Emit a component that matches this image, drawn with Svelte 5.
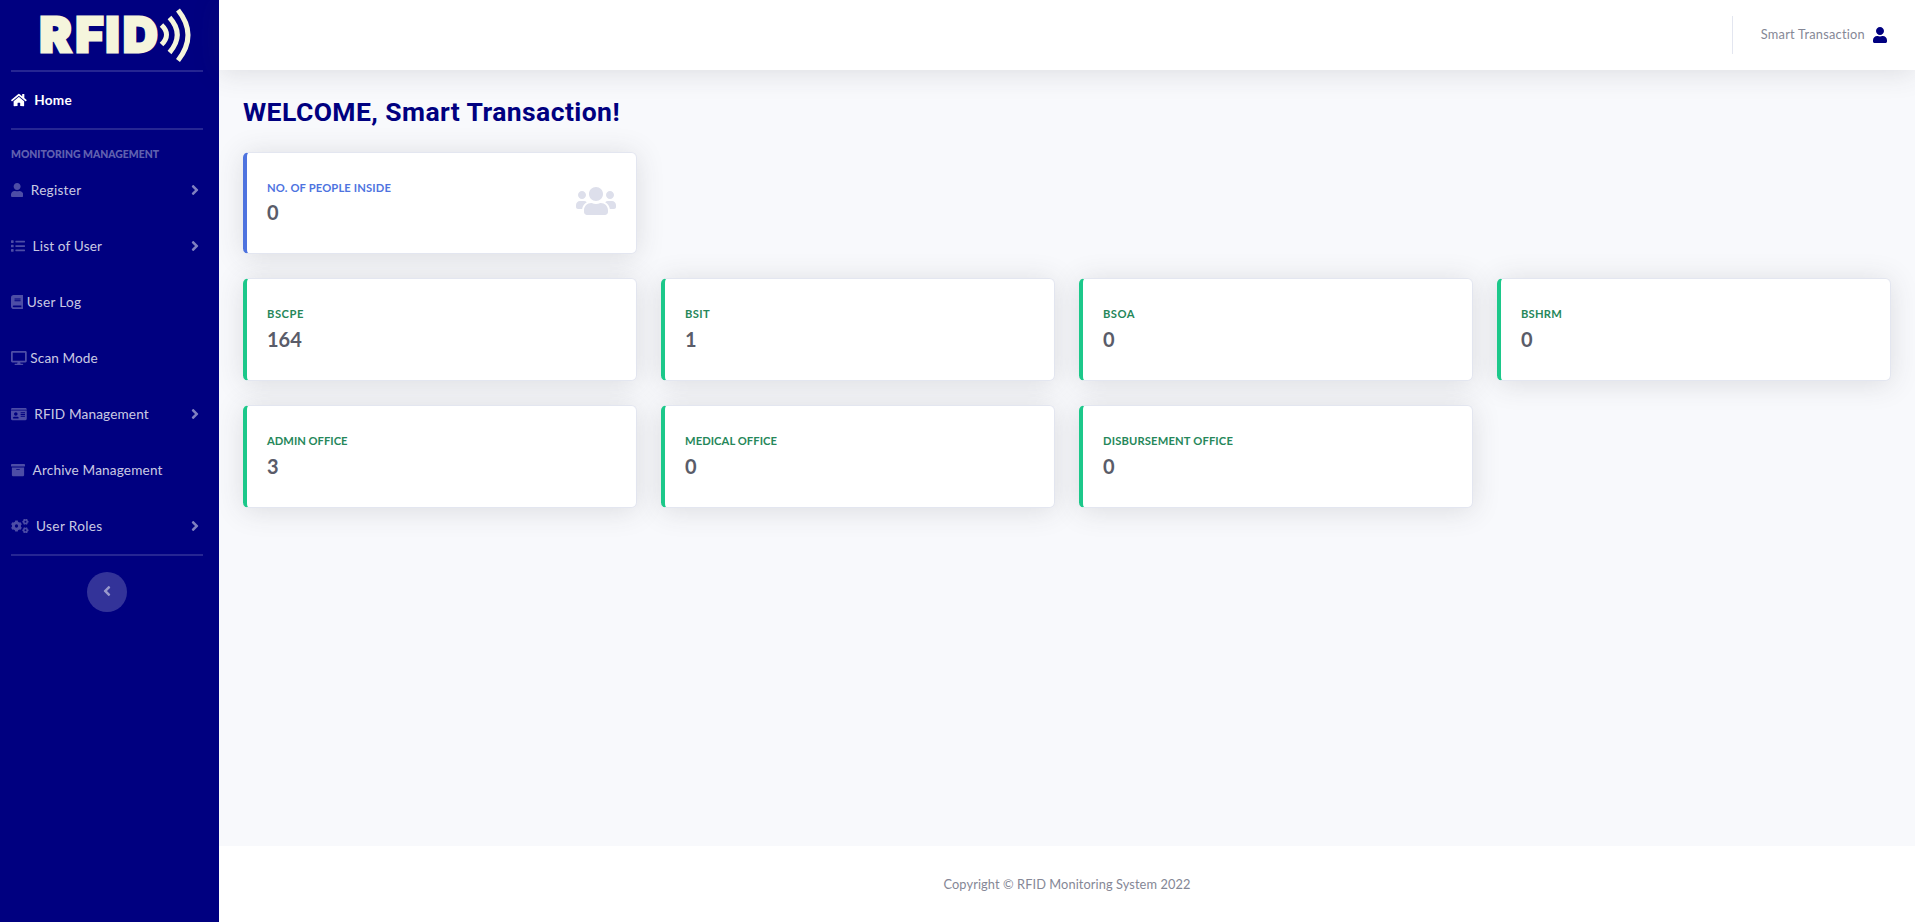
<script>
  const icons = {
    home: [576, 'M280.37 148.26L96 300.11V464a16 16 0 0 0 16 16l112.06-.29a16 16 0 0 0 15.92-16V368a16 16 0 0 1 16-16h64a16 16 0 0 1 16 16v95.64a16 16 0 0 0 16 16.05L464 480a16 16 0 0 0 16-16V300L295.67 148.26a12.19 12.19 0 0 0-15.3 0zM571.6 251.47L488 182.56V44.05a12 12 0 0 0-12-12h-56a12 12 0 0 0-12 12v72.61L318.47 43a48 48 0 0 0-61 0L4.34 251.47a12 12 0 0 0-1.6 16.9l25.5 31A12 12 0 0 0 45.15 301l235.22-193.74a12.19 12.19 0 0 1 15.3 0L530.9 301a12 12 0 0 0 16.9-1.6l25.5-31a12 12 0 0 0-1.7-16.93z'],
    user: [448, 'M224 256c70.7 0 128-57.3 128-128S294.7 0 224 0 96 57.3 96 128s57.3 128 128 128zm89.6 32h-16.7c-22.2 10.2-46.9 16-72.9 16s-50.6-5.8-72.9-16h-16.7C60.2 288 0 348.2 0 422.4V464c0 26.5 21.5 48 48 48h352c26.5 0 48-21.5 48-48v-41.6c0-74.2-60.2-134.4-134.4-134.4z'],
    list: [512, 'M80 368H16a16 16 0 0 0-16 16v64a16 16 0 0 0 16 16h64a16 16 0 0 0 16-16v-64a16 16 0 0 0-16-16zm0-320H16A16 16 0 0 0 0 64v64a16 16 0 0 0 16 16h64a16 16 0 0 0 16-16V64a16 16 0 0 0-16-16zm0 160H16a16 16 0 0 0-16 16v64a16 16 0 0 0 16 16h64a16 16 0 0 0 16-16v-64a16 16 0 0 0-16-16zm416 176H176a16 16 0 0 0-16 16v32a16 16 0 0 0 16 16h320a16 16 0 0 0 16-16v-32a16 16 0 0 0-16-16zm0-320H176a16 16 0 0 0-16 16v32a16 16 0 0 0 16 16h320a16 16 0 0 0 16-16V80a16 16 0 0 0-16-16zm0 160H176a16 16 0 0 0-16 16v32a16 16 0 0 0 16 16h320a16 16 0 0 0 16-16v-32a16 16 0 0 0-16-16z'],
    book: [448, 'M448 360V24c0-13.3-10.7-24-24-24H96C43 0 0 43 0 96v320c0 53 43 96 96 96h328c13.3 0 24-10.7 24-24v-16c0-7.5-3.5-14.3-8.9-18.7-4.2-15.4-4.2-59.3 0-74.7 5.4-4.3 8.9-11.1 8.9-18.6zM128 134c0-3.3 2.7-6 6-6h212c3.3 0 6 2.7 6 6v20c0 3.3-2.7 6-6 6H134c-3.3 0-6-2.7-6-6v-20zm0 64c0-3.3 2.7-6 6-6h212c3.3 0 6 2.7 6 6v20c0 3.3-2.7 6-6 6H134c-3.3 0-6-2.7-6-6v-20zm253.4 250H96c-17.7 0-32-14.3-32-32 0-17.6 14.4-32 32-32h285.4c-1.9 17.1-1.9 46.9 0 64z'],
    desktop: [576, 'M528 0H48C21.5 0 0 21.5 0 48v320c0 26.5 21.5 48 48 48h192l-16 48h-72c-13.3 0-24 10.7-24 24s10.7 24 24 24h272c13.3 0 24-10.7 24-24s-10.7-24-24-24h-72l-16-48h192c26.5 0 48-21.5 48-48V48c0-26.5-21.5-48-48-48zm-16 352H64V64h448v288z'],
    card: [576, 'M528 32H48C21.5 32 0 53.5 0 80v16h576V80c0-26.5-21.5-48-48-48zM0 432c0 26.5 21.5 48 48 48h480c26.5 0 48-21.5 48-48V128H0v304zm352-232c0-4.4 3.6-8 8-8h144c4.4 0 8 3.6 8 8v16c0 4.4-3.6 8-8 8H360c-4.4 0-8-3.6-8-8v-16zm0 64c0-4.4 3.6-8 8-8h144c4.4 0 8 3.6 8 8v16c0 4.4-3.6 8-8 8H360c-4.4 0-8-3.6-8-8v-16zm0 64c0-4.4 3.6-8 8-8h144c4.4 0 8 3.6 8 8v16c0 4.4-3.6 8-8 8H360c-4.4 0-8-3.6-8-8v-16zM176 192c35.3 0 64 28.7 64 64s-28.7 64-64 64-64-28.7-64-64 28.7-64 64-64zM67.1 396.2C75.5 370.5 99.6 352 128 352h8.2c12.3 5.1 25.7 8 39.8 8s27.6-2.9 39.8-8h8.2c28.4 0 52.5 18.5 60.9 44.2 3.2 9.9-5.2 19.8-15.6 19.8H82.7c-10.4 0-18.8-10-15.6-19.8z'],
    archive: [512, 'M32 448c0 17.7 14.3 32 32 32h384c17.7 0 32-14.3 32-32V160H32v288zm160-212c0-6.6 5.4-12 12-12h104c6.6 0 12 5.4 12 12v8c0 6.6-5.4 12-12 12H204c-6.6 0-12-5.4-12-12v-8zM480 32H32C14.3 32 0 46.3 0 64v48c0 8.8 7.2 16 16 16h480c8.8 0 16-7.2 16-16V64c0-17.7-14.3-32-32-32z'],
    cogs: [640, gear(200, 256, 204, 166, 60, 30) + gear(528, 100, 116, 94, 36, 0) + gear(528, 412, 116, 94, 36, 0)],
    users: [640, 'M96 224c35.3 0 64-28.7 64-64s-28.7-64-64-64-64 28.7-64 64 28.7 64 64 64zm448 0c35.3 0 64-28.7 64-64s-28.7-64-64-64-64 28.7-64 64 28.7 64 64 64zm32 32h-64c-17.6 0-33.5 7.1-45.1 18.6 40.3 22.1 68.9 62 75.1 109.4h66c17.7 0 32-14.3 32-32v-32c0-35.3-28.7-64-64-64zm-256 0c61.9 0 112-50.1 112-112S381.9 32 320 32 208 82.1 208 144s50.1 112 112 112zm76.8 32h-8.3c-20.8 10-43.9 16-68.5 16s-47.6-6-68.5-16h-8.3C179.6 288 128 339.6 128 403.2V432c0 26.5 21.5 48 48 48h288c26.5 0 48-21.5 48-48v-28.8c0-63.6-51.6-115.2-115.2-115.2zm-223.7-13.4C161.5 263.1 145.6 256 128 256H64c-35.3 0-64 28.7-64 64v32c0 17.7 14.3 32 32 32h65.9c6.3-47.4 34.9-87.3 75.2-109.4z'],
    right: [256, 'M224.3 273l-136 136c-9.4 9.4-24.6 9.4-33.9 0l-22.6-22.6c-9.4-9.4-9.4-24.6 0-33.9l96.4-96.4-96.4-96.4c-9.4-9.4-9.4-24.6 0-33.9L54.3 103c9.4-9.4 24.6-9.4 33.9 0l136 136c9.5 9.4 9.5 24.6.1 34z'],
    left: [256, 'M31.7 239l136-136c9.4-9.4 24.6-9.4 33.9 0l22.6 22.6c9.4 9.4 9.4 24.6 0 33.9L127.9 256l96.4 96.4c9.4 9.4 9.4 24.6 0 33.9L201.7 409c-9.4 9.4-24.6 9.4-33.9 0l-136-136c-9.5-9.4-9.5-24.6-.1-34z']
  };

  // Six-toothed gear outline with a round hole.
  function gear(cx, cy, outer, inner, hole, turn) {
    const pts = [];
    for (let i = 0; i < 6; i++) {
      for (const [off, r] of [[-20, inner], [-13, outer], [13, outer], [20, inner]]) {
        const a = ((i * 60 + off + turn) * Math.PI) / 180;
        pts.push(`${(cx + r * Math.cos(a)).toFixed(1)} ${(cy + r * Math.sin(a)).toFixed(1)}`);
      }
    }
    return `M${pts.join('L')}zM${cx - hole} ${cy}a${hole} ${hole} 0 1 0 ${2 * hole} 0a${hole} ${hole} 0 1 0 ${-2 * hole} 0z`;
  }

  const menu = [
    { label: 'Register', icon: 'user', more: true, width: 50.5 },
    { label: 'List of User', icon: 'list', more: true, width: 69.5 },
    { label: 'User Log', icon: 'book', tight: true, width: 54.5 },
    { label: 'Scan Mode', icon: 'desktop', tight: true, width: 67.5 },
    { label: 'RFID Management', icon: 'card', more: true, width: 114.5 },
    { label: 'Archive Management', icon: 'archive', width: 130 },
    { label: 'User Roles', icon: 'cogs', more: true, width: 66.5 }
  ];

  const rows = [
    [{ label: 'No. of people inside', value: 0, people: true, width: 124 }],
    [
      { label: 'BSCPE', value: 164, width: 37 },
      { label: 'BSIT', value: 1, width: 25 },
      { label: 'BSOA', value: 0, width: 32 },
      { label: 'BSHRM', value: 0, width: 41 }
    ],
    [
      { label: 'Admin Office', value: 3, width: 80.5 },
      { label: 'Medical Office', value: 0, width: 92 },
      { label: 'Disbursement Office', value: 0, width: 130 }
    ]
  ];

  // Tracks the text so that it takes the given width.
  function fit(node, width) {
    const natural = node.getBoundingClientRect().width;
    node.style.letterSpacing = `${(width - natural) / node.textContent.length}px`;
  }
</script>

{#snippet glyph(name)}
  <svg class="icon" viewBox="0 0 {icons[name][0]} 512" style:width="{icons[name][0] / 512}em" aria-hidden="true">
    <path fill="currentColor" fill-rule="evenodd" d={icons[name][1]} />
  </svg>
{/snippet}

<div class="page">
  <nav class="sidebar">
    <svg class="logo" viewBox="0 0 219 70" role="img">
      <text x="39.5 75.5 105.5 123" y="51.800" font-size="48">RFID</text>
      <g fill="none" stroke-width="5">
        <path d="M161.500 25Q171.500 34.500 161.500 44.500" />
        <path d="M169.500 17.500Q185 34.500 169.500 52.500" />
        <path d="M178 10Q198 35 178 60.500" />
      </g>
    </svg>
    <hr />
    <a class="item home" href="#home">
      {@render glyph('home')}<span use:fit={37.5}>Home</span>
    </a>
    <hr />
    <div class="section"><span use:fit={148}>Monitoring Management</span></div>
    {#each menu as m}
      <a class="item" class:tight={m.tight} href="#menu">
        {@render glyph(m.icon)}<span use:fit={m.width}>{m.label}</span>
        {#if m.more}<i class="more">{@render glyph('right')}</i>{/if}
      </a>
    {/each}
    <hr />
    <button class="toggle" aria-label="Collapse">{@render glyph('left')}</button>
  </nav>

  <div class="main">
    <header>
      <div class="account">
        <span use:fit={104.5}>Smart Transaction</span>
        {@render glyph('user')}
      </div>
    </header>
    <main>
      <h1><span use:fit={377}>WELCOME, Smart Transaction!</span></h1>
      {#each rows as row}
        <div class="row">
          {#each row as c}
            <div class="card" class:people={c.people}>
              <div class="stat">
                <div class="label"><span use:fit={c.width}>{c.label}</span></div>
                <div class="value">{c.value}</div>
              </div>
              {#if c.people}{@render glyph('users')}{/if}
            </div>
          {/each}
        </div>
      {/each}
    </main>
    <footer><span use:fit={247}>Copyright © RFID Monitoring System 2022</span></footer>
  </div>
</div>

<style>
  :global(body) { margin: 0; }
  .page {
    display: flex;
    height: 922px;
    overflow: hidden;
    font-family: Lato, 'Open Sans', sans-serif;
    background: #f8f9fc;
  }
  .page * { box-sizing: border-box; }
  span { white-space: nowrap; }
  .icon { display: block; flex: none; height: 1em; }

  .sidebar { width: 219px; flex: none; background: #000080; display: flex; flex-direction: column; }
  .logo { display: block; width: 219px; height: 70px; flex: none; }
  .logo text {
    font-family: Inter, sans-serif;
    font-weight: 900;
    fill: #f5f5dc;
    stroke: #f5f5dc;
    stroke-width: 2.8px;
  }
  .logo g { stroke: #f5f5dc; }
  hr { width: 192px; height: 2px; margin: 0 0 0 11px; border: 0; flex: none; background: rgba(255, 255, 255, .15); }
  .item {
    display: flex;
    align-items: center;
    height: 56px;
    flex: none;
    padding: 0 20px 0 11px;
    gap: 7.6px;
    font-size: 13.6px;
    color: rgba(255, 255, 255, .8);
    text-decoration: none;
  }
  .item > .icon { font-size: 14px; color: rgba(255, 255, 255, .3); }
  .item.tight { gap: 3.6px; }
  .item.home { font-weight: 700; color: #fff; }
  .item.home > .icon { color: #fff; }
  .more { margin-left: auto; font-size: 16px; color: rgba(255, 255, 255, .5); }
  .section {
    height: 32px;
    flex: none;
    padding: 15px 0 0 11px;
    font-size: 10.4px;
    font-weight: 900;
    line-height: 18px;
    text-transform: uppercase;
    color: rgba(255, 255, 255, .4);
  }
  .toggle {
    display: flex;
    align-items: center;
    justify-content: center;
    width: 40px;
    height: 40px;
    margin: 16px 0 0 87px;
    padding: 0 1px 2px 0;
    border: 0;
    border-radius: 50%;
    font-size: 16px;
    color: rgba(255, 255, 255, .5);
    background: rgba(255, 255, 255, .2);
  }

  .main { flex: 1; min-width: 0; display: flex; flex-direction: column; }
  header {
    height: 70px;
    flex: none;
    display: flex;
    align-items: center;
    justify-content: flex-end;
    padding-right: 28px;
    background: #fff;
    box-shadow: 0 2.4px 28px rgba(58, 59, 69, .15);
  }
  .account {
    display: flex;
    align-items: center;
    gap: 8px;
    height: 38px;
    padding-left: 28px;
    border-left: 1px solid #e3e6f0;
    font-size: 12.8px;
    color: #858796;
  }
  .account span { padding-bottom: 3px; }
  .account .icon { font-size: 16px; color: #000080; }
  main { flex: 1; padding: 24px 24px 0; }
  h1 {
    margin: 0;
    height: 58px;
    font: 700 26.5px/35px Roboto, Arial, sans-serif;
    color: #000080;
  }
  .row { display: grid; grid-template-columns: repeat(4, 1fr); gap: 24px; margin-bottom: 24px; }
  .card {
    display: flex;
    align-items: center;
    justify-content: space-between;
    height: 103px;
    padding: 0 20px;
    border: 1px solid #e3e6f0;
    border-left: 4px solid #1cc88a;
    border-radius: 5.6px;
    background: #fff;
    box-shadow: 0 2.4px 28px rgba(58, 59, 69, .15);
  }
  .card.people { height: 102px; border-left-color: #4e73df; }
  .card .icon { font-size: 32px; color: #dddfeb; margin-top: -4px; }
  .stat { padding-bottom: 4px; }
  .label {
    font-size: 11.2px;
    font-weight: 700;
    line-height: 17px;
    margin-bottom: 5px;
    text-transform: uppercase;
    color: #26875a;
  }
  .people .label { color: #4e73df; margin-bottom: 4px; }
  .value { font-size: 20px; font-weight: 700; line-height: 24px; color: #5a5c69; }
  footer {
    height: 76px;
    flex: none;
    display: flex;
    align-items: center;
    justify-content: center;
    font-size: 12.8px;
    color: #858796;
    background: #fff;
  }
</style>
